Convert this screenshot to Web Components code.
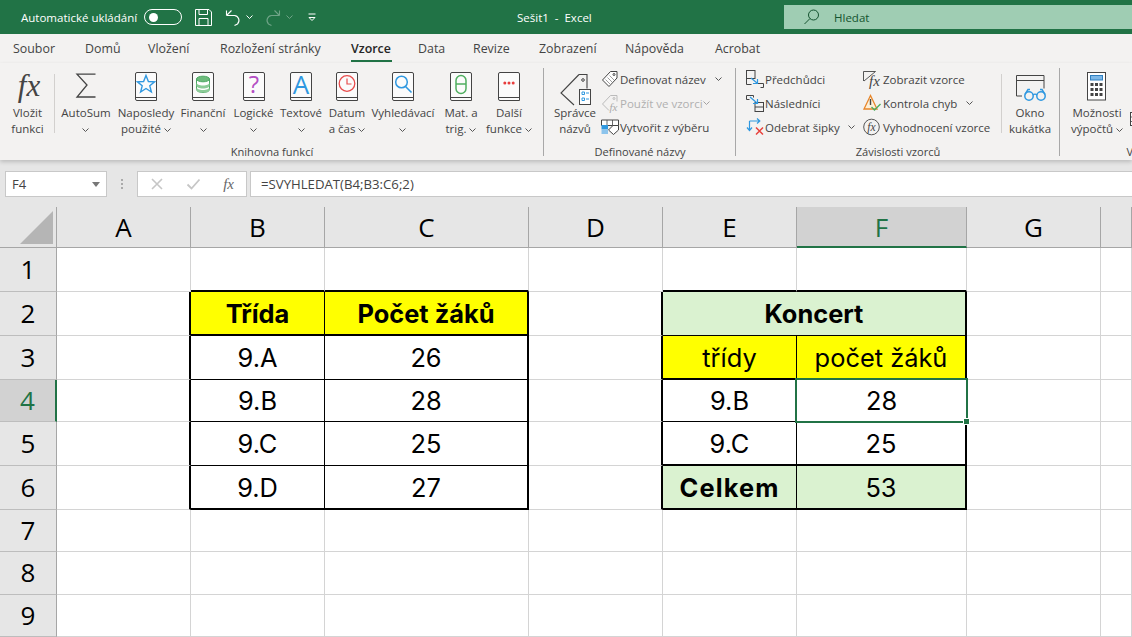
<!DOCTYPE html>
<html lang="cs">
<head>
<meta charset="utf-8">
<title>Sešit1 - Excel</title>
<style>
  html, body { margin: 0; height: 637px; overflow: hidden; background: #e6e6e6; }
  body { font-family: "Open Sans", "Liberation Sans", sans-serif; font-size: 11.5px; color: #444; }
</style>
</head>
<body>
<excel-app>
  <excel-titlebar></excel-titlebar>
  <excel-tabs></excel-tabs>
  <excel-ribbon>
    <rb-group label="Knihovna funkcí" style="width:544px">
      <rb-big w="53" style="margin-left:1px"><rb-icon name="fx" slot="icon"></rb-icon>Vložit<br>funkci</rb-big>
      <rb-sep></rb-sep>
      <rb-big w="62"><rb-icon name="sigma" slot="icon"></rb-icon>AutoSum<br><rb-chev></rb-chev></rb-big>
      <rb-big w="58"><rb-icon name="star" slot="icon"></rb-icon>Naposledy<br>použité <rb-chev></rb-chev></rb-big>
      <rb-big w="56"><rb-icon name="db" slot="icon"></rb-icon>Finanční<br><rb-chev></rb-chev></rb-big>
      <rb-big w="45"><rb-icon name="question" slot="icon"></rb-icon>Logické<br><rb-chev></rb-chev></rb-big>
      <rb-big w="50"><rb-icon name="letter" slot="icon"></rb-icon>Textové<br><rb-chev></rb-chev></rb-big>
      <rb-big w="42"><rb-icon name="clock" slot="icon"></rb-icon>Datum<br>a čas <rb-chev></rb-chev></rb-big>
      <rb-big w="70"><rb-icon name="search" slot="icon"></rb-icon>Vyhledávací<br><rb-chev></rb-chev></rb-big>
      <rb-big w="46"><rb-icon name="theta" slot="icon"></rb-icon>Mat. a<br>trig. <rb-chev></rb-chev></rb-big>
      <rb-big w="50"><rb-icon name="dots" slot="icon"></rb-icon>Další<br>funkce <rb-chev></rb-chev></rb-big>
    </rb-group>
    <rb-group label="Definované názvy" style="width:192px">
      <rb-big w="54" style="margin-left:4px"><rb-icon name="bigtag" slot="icon"></rb-icon>Správce<br>názvů</rb-big>
      <rb-col style="margin-left:-1px">
        <rb-small gap="19"><rb-icon name="tag" slot="icon"></rb-icon>Definovat název<rb-chev style="margin-left:9px"></rb-chev></rb-small>
        <rb-small gap="19" disabled><rb-icon name="tagfx" slot="icon"></rb-icon>Použít ve vzorci <rb-chev style="opacity:.5"></rb-chev></rb-small>
        <rb-small gap="19"><rb-icon name="tabletag" slot="icon"></rb-icon>Vytvořit z výběru</rb-small>
      </rb-col>
    </rb-group>
    <rb-group label="Závislosti vzorců" label-pad="10" style="width:324px;padding-left:10px;box-sizing:border-box">
      <rb-col style="width:117px">
        <rb-small gap="19"><rb-icon name="prec" slot="icon"></rb-icon>Předchůdci</rb-small>
        <rb-small gap="19"><rb-icon name="dep" slot="icon"></rb-icon>Následníci</rb-small>
        <rb-small gap="19"><rb-icon name="remove" slot="icon"></rb-icon>Odebrat šipky<rb-chev style="margin-left:8px"></rb-chev></rb-small>
      </rb-col>
      <rb-col style="width:138px">
        <rb-small><rb-icon name="showfx" slot="icon"></rb-icon>Zobrazit vzorce</rb-small>
        <rb-small><rb-icon name="warn" slot="icon"></rb-icon>Kontrola chyb<rb-chev style="margin-left:9px"></rb-chev></rb-small>
        <rb-small><rb-icon name="evalfx" slot="icon"></rb-icon>Vyhodnocení vzorce</rb-small>
      </rb-col>
      <rb-sep></rb-sep>
      <rb-big w="56"><rb-icon name="window" slot="icon"></rb-icon>Okno<br>kukátka</rb-big>
    </rb-group>
    <rb-group label="Výpočet" label-pad="16" last style="width:178px;padding-left:12px;box-sizing:border-box">
      <rb-big w="50"><rb-icon name="calc" slot="icon"></rb-icon>Možnosti<br>výpočtů <rb-chev></rb-chev></rb-big>
      <rb-icon name="sheet" style="margin:49px 0 0 8px"></rb-icon>
    </rb-group>
  </excel-ribbon>
  <excel-formulabar name="F4" formula="=SVYHLEDAT(B4;B3:C6;2)"></excel-formulabar>
  <excel-sheet></excel-sheet>
</excel-app>

<script>
const BLUE = "#2f98e0", DARK = "#444", GREEN = "#217346"

function book(inner) {
  return `<path d="M2 .5h18a1.5 1.5 0 0 1 1.5 1.5v26.5H2A1.5 1.5 0 0 1 .5 27V2A1.5 1.5 0 0 1 2 .5z" fill="#fbfbfb" stroke="${DARK}"/>
    <path d="M1 25.5h20.5" fill="none" stroke="${DARK}"/>${inner}`
}

// name: [width, height, markup]
const ICONS = {
  fx: [36, 29, `<text x="19" y="24" text-anchor="middle" font-family="Liberation Serif" font-style="italic" font-size="31" fill="${DARK}">fx</text>`],
  sigma: [22, 26, `<path d="M20.5 2.200H2L12 13 2 25h18.500" fill="none" stroke="${DARK}" stroke-width="1.300"/>`],
  star: [22, 29, book(`<path d="M11 3.500l2.400 6 6.200.300-4.800 4 1.600 6.200-5.400-3.500L5.600 20l1.600-6.200-4.800-4 6.200-.300z" fill="none" stroke="${BLUE}" stroke-width="1.400"/>`)],
  db: [22, 29, book(`<path d="M4.500 7v10.500c0 1.800 3 3 6.500 3s6.500-1.200 6.500-3V7z" fill="#fff" stroke="#4ea864"/>
    <ellipse cx="11" cy="7" rx="6.500" ry="2.800" fill="#6dbb7c" stroke="#4ea864"/>
    <path d="M4.500 10.500c0 1.800 3 3 6.500 3s6.500-1.200 6.500-3v3c0 1.800-3 3-6.500 3s-6.500-1.200-6.500-3zM4.500 15c0 1.800 3 3 6.500 3s6.500-1.200 6.500-3v2.500c0 1.800-3 3-6.500 3s-6.500-1.200-6.500-3z" fill="#8ccc98"/>`)],
  question: [22, 29, book(`<text x="11" y="21" text-anchor="middle" font-family="Open Sans" font-size="24" fill="#b44fc4">?</text>`)],
  letter: [22, 29, book(`<text x="11" y="22" text-anchor="middle" font-family="Open Sans" font-size="26" fill="${BLUE}">A</text>`)],
  clock: [22, 29, book(`<circle cx="11" cy="11.500" r="7.800" fill="none" stroke="#e84c4c" stroke-width="1.300"/><path d="M11 6.500v5.500h4.500" fill="none" stroke="#e84c4c" stroke-width="1.200"/>`)],
  search: [22, 29, book(`<circle cx="9.500" cy="10" r="5.800" fill="none" stroke="${BLUE}" stroke-width="1.500"/><path d="M13.500 14.500l6 6" stroke="${BLUE}" stroke-width="1.600"/>`)],
  theta: [22, 29, book(`<rect x="6" y="3.500" width="10" height="18" rx="5" fill="none" stroke="#4fae5f" stroke-width="1.500"/><path d="M6 12h10" stroke="#4fae5f" stroke-width="1.500"/>`)],
  dots: [22, 29, book(`<g fill="#e83c3c"><circle cx="6.800" cy="11" r="1.500"/><circle cx="11" cy="11" r="1.500"/><circle cx="15.200" cy="11" r="1.500"/></g>`)],
  bigtag: [34, 33, `<path d="M21 2.500h8v14M21 2.500L3 21l13 12" fill="none" stroke="${DARK}" stroke-width="1.100"/>
    <circle cx="25" cy="8" r="1.300" fill="none" stroke="${DARK}"/>
    <rect x="21.500" y="17.500" width="11" height="15" fill="#fff" stroke="${DARK}"/>
    <path d="M24 20h2.500v2.500H24zM24 26h2.500v2.500H24z" fill="none" stroke="${BLUE}"/><path d="M28 21h3M28 27h3" stroke="${BLUE}"/>`],
  tag: [18, 18, `<path d="M1.500 10L9.500 1.500h6.500v6.500L8 16.500z" fill="#fff" stroke="${DARK}"/><circle cx="13" cy="4.500" r="1" fill="none" stroke="${DARK}"/>
    <path d="M4.500 9.500l4.500 4.500M6.500 7.500l4.500 4.500M8.500 5.500l4.500 4.500" stroke="#888" stroke-width=".8"/>`],
  tagfx: [18, 18, `<path d="M8 16.500L1.500 10 9.500 1.500h6.500v6" fill="none" stroke="#bbb"/><circle cx="13" cy="4.500" r="1" fill="none" stroke="#bbb"/>
    <text x="8.500" y="17" font-family="Liberation Serif" font-style="italic" font-size="11" fill="#aaa">fx</text>`],
  tabletag: [18, 16, `<path d="M.5 1h17v5.500H.5z" fill="#fff" stroke="${DARK}"/><path d="M6 1v5.500M11.500 1v5.500" stroke="${DARK}" stroke-width=".8"/>
    <path d="M.5 6h6.500v4.500H.5z" fill="${BLUE}"/><path d="M.5 10.500h6.500v4.500H.5z" fill="#8cc4ec"/>
    <path d="M7.500 11l4.500-4.500h5.500V11L12.500 15.500z" fill="#fff" stroke="${DARK}"/>`],
  prec: [18, 18, `<rect x=".5" y=".5" width="8.500" height="8" fill="none" stroke="${DARK}"/><path d="M.5 8.500v6h5" fill="none" stroke="${DARK}"/>
    <path d="M12 13.500h5.500v4h-3" fill="none" stroke="${DARK}"/><path d="M5 8l6 5" stroke="${BLUE}" stroke-width="1.200"/><path d="M7 13.500h4.500V9" fill="none" stroke="${BLUE}" stroke-width="1.200"/>`],
  dep: [18, 18, `<path d="M.5 5.500v-4h7v2" fill="none" stroke="${DARK}"/><path d="M.5 5.500h3" stroke="${DARK}"/>
    <rect x="9" y="8.500" width="8.500" height="9" fill="#f3f2f1" stroke="${DARK}"/><path d="M9 13h8.500" stroke="${DARK}"/>
    <path d="M4 3l7 6" stroke="${BLUE}" stroke-width="1.200"/><path d="M7 9.500h4.500V5" fill="none" stroke="${BLUE}" stroke-width="1.200"/>`],
  remove: [18, 18, `<path d="M3.500 3v9M1 9.500l2.500 3 2.500-3M3.500 3h10M11 .5l2.800 2.500L11 5.500" fill="none" stroke="${BLUE}" stroke-width="1.200"/>
    <path d="M10 9.500l7 7M17 9.500l-7 7" stroke="#e8413c" stroke-width="1.500"/>`],
  showfx: [18, 18, `<path d="M.5 11V1.500h12M1 11L12.500 1.500" fill="none" stroke="${DARK}" stroke-width=".9"/>
    <text x="6" y="16" font-family="Liberation Serif" font-style="italic" font-size="15" fill="${DARK}">fx</text>`],
  warn: [18, 18, `<path d="M7.500 1.500L1 15h13z" fill="#fdf0d8" stroke="#e8862a" stroke-width="1.300"/><path d="M7.500 5v6" stroke="${DARK}" stroke-width="1.400"/>
    <path d="M8.500 13l3 3 6-6" fill="none" stroke="#4fae5f" stroke-width="1.400"/>`],
  evalfx: [18, 18, `<circle cx="8.500" cy="9" r="7.800" fill="none" stroke="${DARK}" stroke-width=".9"/>
    <text x="8.500" y="13" text-anchor="middle" font-family="Liberation Serif" font-style="italic" font-size="11.500" fill="${DARK}">fx</text>`],
  window: [32, 30, `<path d="M8 24H2.500V3.500h27.500v13" fill="none" stroke="${DARK}"/><path d="M2.500 8.500h27.500" stroke="${DARK}"/>
    <g fill="none" stroke="${BLUE}" stroke-width="1.500"><circle cx="15" cy="24" r="4.200"/><circle cx="27" cy="24" r="4.200"/><path d="M19 23c1-1 3-1 4 0M11 22.500l3-5h2M31 22.500l-3-5h-2"/></g>`],
  calc: [20, 29, `<rect x=".5" y=".5" width="18" height="27.500" fill="#fff" stroke="${DARK}"/><rect x="3.500" y="3.500" width="12" height="4.500" fill="#7db8e8" stroke="#2f7fc0"/>
    <g fill="#444"><path d="M3.500 11h3v3h-3zM8 11h3v3H8zM12.500 11h3v3h-3zM3.500 16h3v3h-3zM8 16h3v3H8zM12.500 16h3v3h-3zM3.500 21h3v3h-3zM8 21h3v3H8zM12.500 21h3v3h-3z"/></g>`],
  sheet: [16, 14, `<rect x=".5" y=".5" width="15" height="13" fill="#fff" stroke="${DARK}"/><path d="M.5 5h15M.5 9.500h15M5.500 .5v13M10.500 .5v13" stroke="${DARK}" stroke-width=".8"/>`],
}

class ExcelApp extends HTMLElement {
  constructor() {
    super()
    this.attachShadow({mode: "open"})
    this.shadowRoot.innerHTML = `
      <style>
        :host { display: flex; flex-direction: column; width: 1132px; height: 637px; overflow: hidden; }
      </style>
      <slot></slot>
    `
  }
}

class RbIcon extends HTMLElement {
  constructor() {
    super()
    this.attachShadow({mode: "open"})
    const [w, h, markup] = ICONS[this.getAttribute("name")]
    this.shadowRoot.innerHTML = `
      <style>
        :host { display: block; width: ${w}px; height: ${h}px; flex: none; }
        svg { display: block; overflow: visible; }
      </style>
      <svg width="${w}" height="${h}" viewBox="0 0 ${w} ${h}">${markup}</svg>
    `
  }
}

class RbChev extends HTMLElement {
  constructor() {
    super()
    this.attachShadow({mode: "open"})
    this.shadowRoot.innerHTML = `
      <style>
        :host { display: inline-block; width: 7px; height: 4px; vertical-align: 1px; }
        svg { display: block; }
      </style>
      <svg width="7" height="4" viewBox="0 0 7 4"><path d="M.5.500l3 3 3-3" fill="none" stroke="#555"/></svg>
    `
  }
}

class ExcelTitlebar extends HTMLElement {
  constructor() {
    super()
    this.attachShadow({mode: "open"})
    this.shadowRoot.innerHTML = `
      <style>
        :host { display: flex; align-items: center; flex: none; height: 34px; background: ${GREEN}; color: #fff; font-size: 11.500px; }
        .auto { margin-left: 21px; width: 123px; white-space: nowrap; }
        .toggle { height: 14px; border: 1px solid #fff; border-radius: 8px; display: flex; align-items: center; padding-left: 4px; width: 32px; }
        .toggle i { width: 9px; height: 9px; border-radius: 50%; background: #fff; }
        svg { display: block; flex: none; }
        .title { position: absolute; left: 517px; }
        .search { margin-left: auto; width: 348px; height: 24px; background: #9fcdb3; display: flex; align-items: center; color: #14532f; }
        .search svg { margin-left: 20px; }
        .search span { margin-left: 15px; }
      </style>
      <span class="auto">Automatické ukládání</span>
      <div class="toggle"><i></i></div>
      <svg style="margin-left:13px" width="17" height="17" viewBox="0 0 17 17"><path d="M.5.500h13.500l2.500 2.500v13.500H.5zM4 .5v5h8.500v-5M4 16.500v-7h9v7" fill="none" stroke="#fff"/></svg>
      <svg style="margin-left:13px" width="16" height="17" viewBox="0 0 16 17"><path d="M1.500 6.500h8a5 5 0 0 1 3 8.500l-3 1.500M1.500 1.500v5M1.500 6.500l5-5" fill="none" stroke="#fff" stroke-width="1.100"/></svg>
      <svg style="margin-left:5px" width="7" height="4" viewBox="0 0 7 4"><path d="M.5.500l3 3 3-3" fill="none" stroke="#fff"/></svg>
      <svg style="margin-left:12px;opacity:.35" width="16" height="17" viewBox="0 0 16 17"><path d="M14.500 6.500h-8a5 5 0 0 0-3 8.500l3 1.500M14.500 1.500v5M14.500 6.500l-5-5" fill="none" stroke="#fff" stroke-width="1.100"/></svg>
      <svg style="margin-left:5px;opacity:.35" width="7" height="4" viewBox="0 0 7 4"><path d="M.5.500l3 3 3-3" fill="none" stroke="#fff"/></svg>
      <svg style="margin-left:15px" width="8" height="8" viewBox="0 0 8 8"><path d="M.5 1h7M1 4.500l3 3 3-3z" fill="none" stroke="#fff"/></svg>
      <span class="title">Sešit1&nbsp; -&nbsp; Excel</span>
      <div class="search">
        <svg width="15" height="16" viewBox="0 0 15 16"><circle cx="9.500" cy="6" r="5" fill="none" stroke="#14532f"/><path d="M6 9.500L.5 15" stroke="#14532f"/></svg>
        <span>Hledat</span>
      </div>
    `
  }
}

class ExcelTabs extends HTMLElement {
  constructor() {
    super()
    this.attachShadow({mode: "open"})
    const tabs = [["Soubor", 72], ["Domů", 63], ["Vložení", 72], ["Rozložení stránky", 131], ["Vzorce", 67], ["Data", 55], ["Revize", 66], ["Zobrazení", 86], ["Nápověda", 90], ["Acrobat", 70]]
    const cols = tabs.map(t => t[1] + "px").join(" ")
    const items = tabs.map(t => `<span class="${t[0] == "Vzorce" ? "on" : ""}">${t[0]}</span>`).join("")
    this.shadowRoot.innerHTML = `
      <style>
        :host { display: grid; grid-template-columns: ${cols}; flex: none; height: 29px; padding-left: 13px; background: #f3f2f1; font-size: 12.400px; color: #444; }
        span { line-height: 30px; white-space: nowrap; }
        .on { color: #262626; font-weight: 600; position: relative; }
        .on::after { content: ""; position: absolute; left: 0; top: 26px; width: 41px; height: 2px; background: ${GREEN}; }
      </style>
      ${items}
    `
  }
}

class ExcelRibbon extends HTMLElement {
  constructor() {
    super()
    this.attachShadow({mode: "open"})
    this.shadowRoot.innerHTML = `
      <style>
        :host { display: flex; flex: none; height: 97px; background: #f3f2f1; box-shadow: 0 2px 4px rgba(0,0,0,.18); position: relative; z-index: 1; }
      </style>
      <slot></slot>
    `
  }
}

class RbGroup extends HTMLElement {
  constructor() {
    super()
    this.attachShadow({mode: "open"})
    const pad = this.getAttribute("label-pad") || 0
    this.shadowRoot.innerHTML = `
      <style>
        :host { display: block; flex: none; position: relative; }
        .row { display: flex; height: 81px; }
        .label { height: 16px; line-height: 16px; text-align: center; font-size: 11.100px; padding-right: ${pad}px; white-space: nowrap; }
        :host::after { content: ""; position: absolute; right: 0; top: 5px; bottom: 4px; width: 1px; background: #a8a8a8; }
      </style>
      <div class="row"><slot></slot></div>
      <div class="label">${this.getAttribute("label")}</div>
    `
  }
}

class RbBig extends HTMLElement {
  constructor() {
    super()
    this.attachShadow({mode: "open"})
    this.shadowRoot.innerHTML = `
      <style>
        :host { display: flex; flex-direction: column; align-items: center; flex: none; width: ${this.getAttribute("w")}px; padding-top: 9px; box-sizing: border-box; }
        .icon { height: 33px; display: flex; justify-content: center; align-items: flex-start; }
        .text { line-height: 16px; text-align: center; white-space: nowrap; }
      </style>
      <div class="icon"><slot name="icon"></slot></div>
      <div class="text"><slot></slot></div>
    `
  }
}

class RbCol extends HTMLElement {
  constructor() {
    super()
    this.attachShadow({mode: "open"})
    this.shadowRoot.innerHTML = `
      <style>
        :host { display: flex; flex-direction: column; flex: none; padding-top: 4px; }
      </style>
      <slot></slot>
    `
  }
}

class RbSmall extends HTMLElement {
  constructor() {
    super()
    this.attachShadow({mode: "open"})
    this.shadowRoot.innerHTML = `
      <style>
        :host { display: flex; align-items: center; height: 24px; white-space: nowrap; }
        :host([disabled]) { color: #b0b0b0; }
        .icon { width: ${this.getAttribute("gap") || 20}px; flex: none; }
      </style>
      <div class="icon"><slot name="icon"></slot></div>
      <slot></slot>
    `
  }
}

class RbSep extends HTMLElement {
  constructor() {
    super()
    this.attachShadow({mode: "open"})
    this.shadowRoot.innerHTML = `
      <style>
        :host { display: block; flex: none; width: 1px; height: 59px; margin-top: 11px; background: #d2d0ce; }
      </style>
    `
  }
}

class ExcelFormulabar extends HTMLElement {
  constructor() {
    super()
    this.attachShadow({mode: "open"})
    this.shadowRoot.innerHTML = `
      <style>
        :host { display: flex; align-items: flex-start; flex: none; height: 47px; padding: 11px 0 0 5px; box-sizing: border-box; background: #e6e6e6; color: #444; font-size: 13px; }
        .box { height: 26px; box-sizing: border-box; background: #fff; border: 1px solid #c8c8c8; display: flex; align-items: center; }
        .name { width: 102px; padding: 0 6px; justify-content: space-between; }
        .name i { border: 4px solid transparent; border-top: 5px solid #777; border-bottom: 0; }
        .grip { width: 30px; display: flex; flex-direction: column; gap: 2px; align-items: center; padding-top: 8px; }
        .grip b { width: 2px; height: 2px; background: #aaa; }
        .fn { width: 110px; justify-content: space-between; padding: 0 12px 0 12px; }
        .fxt { font: italic 15px "Liberation Serif", serif; color: #666; }
        .formula { flex: 1; margin-left: 3px; border-right: 0; padding-left: 10px; white-space: nowrap; font-size: 13.200px; }
      </style>
      <div class="box name"><span>${this.getAttribute("name")}</span><i></i></div>
      <div class="grip"><b></b><b></b><b></b></div>
      <div class="box fn">
        <svg width="14" height="14" viewBox="0 0 14 14"><path d="M2 2l10 10M12 2L2 12" stroke="#c6c6c6" stroke-width="1.600"/></svg>
        <svg width="15" height="14" viewBox="0 0 15 14"><path d="M1.500 7.500l4 4 8-9" fill="none" stroke="#c6c6c6" stroke-width="1.800"/></svg>
        <span class="fxt">fx</span>
      </div>
      <div class="box formula">${this.getAttribute("formula")}</div>
    `
  }
}

class ExcelCell extends HTMLElement {
  constructor() {
    super()
    this.attachShadow({mode: "open"})
    this.shadowRoot.innerHTML = `
      <style>
        :host { display: flex; align-items: center; justify-content: center; box-sizing: border-box; min-width: 0;
          border-right: 1px solid #d4d4d4; border-bottom: 1px solid #d4d4d4; background: #fff; color: #000;
          font: 25.400px Inter, "Liberation Sans", sans-serif; white-space: nowrap; }
        :host([r="1"]) { border-right: 1px solid #000; }
        :host([r="2"]) { border-right: 2px solid #000; }
        :host([b="1"]) { border-bottom: 1px solid #000; }
        :host([b="2"]) { border-bottom: 2px solid #000; }
        :host([fill="y"]) { background: #ffff00; }
        :host([fill="g"]) { background: #daf2d0; }
        :host([bold]) { font-weight: 700; }
        :host([wide]) { letter-spacing: 1.100px; }
      </style>
      <slot></slot>
    `
  }
}

class ExcelHead extends HTMLElement {
  constructor() {
    super()
    this.attachShadow({mode: "open"})
    this.shadowRoot.innerHTML = `
      <style>
        :host { display: flex; align-items: center; justify-content: center; box-sizing: border-box; min-width: 0; background: #e6e6e6; color: #000;
          border-right: 1px solid #a6a6a6; border-bottom: 1px solid #a6a6a6; font: 26px "Open Sans", sans-serif; }
        :host([kind="row"]) { border-bottom-color: #bdbdbd; padding-bottom: 2px; }
        :host([active]) { background: #d2d2d2; color: ${GREEN}; }
        :host([active][kind="col"]) { border-bottom: 2px solid ${GREEN}; }
        :host([active][kind="row"]) { border-right: 2px solid ${GREEN}; }
      </style>
      <slot></slot>
    `
  }
}

class ExcelSheet extends HTMLElement {
  constructor() {
    super()
    this.attachShadow({mode: "open"})
    const cols = ["A", "B", "C", "D", "E", "F", "G", "H"]
    // [text, r, b, fill, bold, span]
    const data = {
      1: {B: ["", 0, 2], C: ["", 0, 2], E: ["", 0, 2], F: ["", 0, 2]},
      2: {A: ["", 2], B: ["Třída", 1, 2, "y", 1], C: ["Počet žáků", 2, 2, "y", 1], D: ["", 2], E: ["Koncert", 2, 1, "g", 1, 2]},
      3: {A: ["", 2], B: ["9.A", 1, 1], C: ["26", 2, 1], D: ["", 2], E: ["třídy", 1, 2, "y"], F: ["počet žáků", 2, 2, "y"]},
      4: {A: ["", 2], B: ["9.B", 1, 1], C: ["28", 2, 1], D: ["", 2], E: ["9.B", 1, 1], F: ["28", 0, 1]},
      5: {A: ["", 2], B: ["9.C", 1, 1], C: ["25", 2, 1], D: ["", 2], E: ["9.C", 1, 2], F: ["25", 2, 2]},
      6: {A: ["", 2], B: ["9.D", 1, 2], C: ["27", 2, 2], D: ["", 2], E: ["Celkem", 1, 2, "g", 1], F: ["53", 2, 2, "g"]},
    }
    let html = `<div class="corner"><svg width="33" height="33" viewBox="0 0 33 33"><path d="M33 0v33H0z" fill="#b5b5b5"/></svg></div>`
    for (const c of cols) html += `<excel-head kind="col" ${c == "F" ? "active" : ""}>${c == "H" ? "" : c}</excel-head>`
    for (let r = 1; r <= 9; r++) {
      html += `<excel-head kind="row" style="grid-area:${r + 1}/1" ${r == 4 ? "active" : ""}>${r}</excel-head>`
      cols.forEach((c, i) => {
        if (r == 2 && c == "F") return
        const d = (data[r] || {})[c] || [""]
        const attrs = (d[1] ? ` r="${d[1]}"` : "") + (d[2] ? ` b="${d[2]}"` : "") + (d[3] ? ` fill="${d[3]}"` : "") + (d[4] ? " bold" : "") + (d[0] == "Celkem" ? " wide" : "")
        html += `<excel-cell${attrs} style="grid-area:${r + 1}/${i + 2}/auto/span ${d[5] || 1}">${d[0]}</excel-cell>`
      })
    }
    this.shadowRoot.innerHTML = `
      <style>
        :host { display: grid; flex: none;
          grid-template-columns: 57px 134px 134px 204px 134px 134px 170px 134px 31px;
          grid-template-rows: 41px 44px 44px 44px 42px 44px 44px 42px 43px 42px; }
        .corner { background: #e6e6e6; border-right: 1px solid #a6a6a6; border-bottom: 1px solid #a6a6a6; box-sizing: border-box; padding: 4px 0 0 20px; }
        .corner svg { display: block; }
        .sel { grid-column: 7; grid-row: 5; margin: -2px -1px -1px -2px; border: 2px solid ${GREEN}; box-sizing: border-box; position: relative; z-index: 2; }
        .sel::after { content: ""; position: absolute; right: -3px; bottom: -3px; width: 5px; height: 5px; background: ${GREEN}; box-shadow: 0 0 0 1px #fff; }
      </style>
      ${html}
      <div class="sel"></div>
    `
  }
}

customElements.define("rb-icon", RbIcon)
customElements.define("rb-chev", RbChev)
customElements.define("rb-big", RbBig)
customElements.define("rb-col", RbCol)
customElements.define("rb-small", RbSmall)
customElements.define("rb-sep", RbSep)
customElements.define("rb-group", RbGroup)
customElements.define("excel-cell", ExcelCell)
customElements.define("excel-head", ExcelHead)
customElements.define("excel-sheet", ExcelSheet)
customElements.define("excel-formulabar", ExcelFormulabar)
customElements.define("excel-ribbon", ExcelRibbon)
customElements.define("excel-tabs", ExcelTabs)
customElements.define("excel-titlebar", ExcelTitlebar)
customElements.define("excel-app", ExcelApp)
</script>
</body>
</html>
